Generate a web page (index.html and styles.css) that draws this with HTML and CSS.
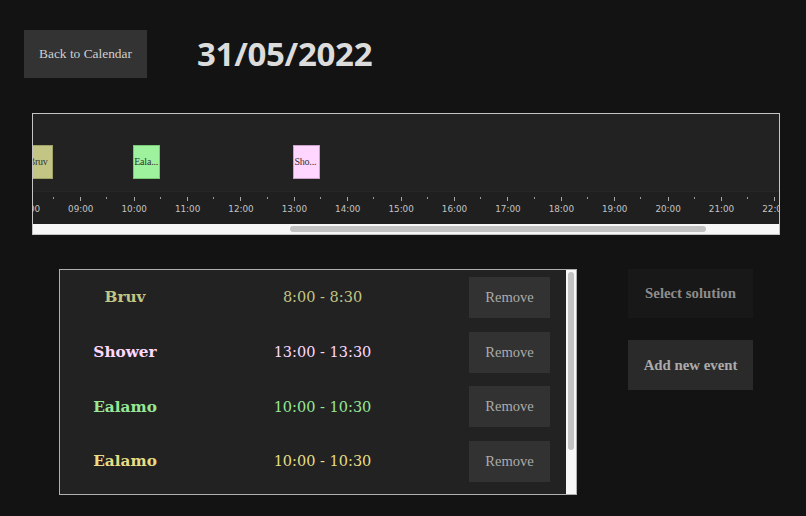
FILE: index.html
```html
<!DOCTYPE html>
<html>
<head>
<meta charset="utf-8">
<link rel="stylesheet" href="styles.css">
</head>
<body>
<header class="top">
  <button class="back-btn">Back to Calendar</button>
  <h1 class="date">31/05/2022</h1>
</header>

<section class="timeline">
  <div class="lane">
    <div class="event ev-bruv" style="left:-6.6px" title="Bruv">Bruv</div>
    <div class="event ev-eala" style="left:100.2px" title="Ealamo">Eala...</div>
    <div class="event ev-shower" style="left:260.4px" title="Shower">Sho...</div>
  </div>
  <div class="axis">
    <div class="axis-row">
      <div class="hour"><span>08:00</span></div>
      <div class="hour"><span>09:00</span></div>
      <div class="hour"><span>10:00</span></div>
      <div class="hour"><span>11:00</span></div>
      <div class="hour"><span>12:00</span></div>
      <div class="hour"><span>13:00</span></div>
      <div class="hour"><span>14:00</span></div>
      <div class="hour"><span>15:00</span></div>
      <div class="hour"><span>16:00</span></div>
      <div class="hour"><span>17:00</span></div>
      <div class="hour"><span>18:00</span></div>
      <div class="hour"><span>19:00</span></div>
      <div class="hour"><span>20:00</span></div>
      <div class="hour"><span>21:00</span></div>
      <div class="hour"><span>22:00</span></div>
    </div>
  </div>
  <div class="hscroll"><div class="hthumb"></div></div>
</section>

<section class="bottom">
  <div class="list">
    <div class="rows">
      <div class="row c-bruv">
        <div class="name">Bruv</div>
        <div class="time">8:00 - 8:30</div>
        <button class="remove">Remove</button>
      </div>
      <div class="row c-shower">
        <div class="name">Shower</div>
        <div class="time">13:00 - 13:30</div>
        <button class="remove">Remove</button>
      </div>
      <div class="row c-eala">
        <div class="name">Ealamo</div>
        <div class="time">10:00 - 10:30</div>
        <button class="remove">Remove</button>
      </div>
      <div class="row c-eala2">
        <div class="name">Ealamo</div>
        <div class="time">10:00 - 10:30</div>
        <button class="remove">Remove</button>
      </div>
    </div>
    <div class="vscroll"><div class="vthumb"></div></div>
  </div>
  <div class="actions">
    <button class="act act-select">Select solution</button>
    <button class="act act-add">Add new event</button>
  </div>
</section>
</body>
</html>
```

FILE: styles.css
```css
html, body {
  margin: 0;
  padding: 0;
  background: #131313;
  width: 806px;
  height: 516px;
  overflow: hidden;
}

button {
  border: none;
  cursor: pointer;
  padding: 0;
}

.top {
  display: flex;
  align-items: center;
  padding: 30px 0 0 24px;
  gap: 50px;
}

.back-btn {
  width: 123px;
  height: 48px;
  background: #333333;
  color: #cfcfcf;
  font-family: "Liberation Serif", serif;
  font-size: 13.4px;
}

.date {
  margin: 0;
  font-family: "Open Sans", sans-serif;
  font-weight: 700;
  font-size: 33px;
  letter-spacing: -0.3px;
  color: #dcdcdc;
  line-height: 48px;
}

.timeline {
  margin: 35px 26px 0 32px;
  border: 1px solid #c4c4c4;
  background: #222222;
  overflow: hidden;
}

.lane {
  position: relative;
  height: 77px;
}

.event {
  position: absolute;
  top: 31px;
  width: 27px;
  height: 34px;
  box-sizing: border-box;
  border: 1px solid;
  font-family: "Liberation Serif", serif;
  font-size: 10px;
  letter-spacing: -0.2px;
  line-height: 32px;
  color: #333;
  padding-left: 0;
  white-space: nowrap;
}

.ev-bruv { background: #c3c585; border-color: #9fa165; padding-left: 1px; }
.ev-eala { background: #9ef29e; border-color: #78c878; }
.ev-shower { background: #ffd6ff; border-color: #c8a0c8; }

.axis {
  height: 33px;
  box-sizing: border-box;
  border-top: 1px solid #262626;
  background: #1f1f1f;
  overflow: hidden;
}

.axis-row {
  display: flex;
  margin-left: -32.3px;
}

.hour {
  position: relative;
  flex: 0 0 53.4px;
  height: 32px;
  text-align: center;
}

.hour::before {
  content: "";
  position: absolute;
  left: 26.2px;
  top: 5px;
  width: 1px;
  height: 4px;
  background: #a8a8a8;
}

.hour::after {
  content: "";
  position: absolute;
  right: 0;
  top: 5px;
  width: 1px;
  height: 2px;
  background: #999;
}

.hour span {
  display: block;
  padding-top: 12px;
  font-family: "DejaVu Sans", sans-serif;
  font-size: 8.8px;
  line-height: 11px;
  color: #c4c4c4;
}

.hscroll {
  height: 10px;
  background: #f7f7f7;
  overflow: hidden;
}

.hthumb {
  margin: 2px 0 0 257px;
  width: 416px;
  height: 6px;
  border-radius: 3px;
  background: #c2c2c2;
}

.bottom {
  display: flex;
  align-items: flex-start;
  margin-top: 34px;
  padding-left: 59px;
  gap: 51px;
}

.list {
  display: flex;
  width: 516px;
  height: 224px;
  border: 1px solid #b0b0b0;
  background: #222222;
}

.rows {
  flex: 1;
}

.row {
  display: grid;
  grid-template-columns: 130px 265px 1fr;
  align-items: center;
  height: 54.7px;
}

.name {
  text-align: center;
  font-family: "DejaVu Serif", serif;
  font-weight: 700;
  font-size: 15.3px;
}

.time {
  text-align: center;
  font-family: "DejaVu Serif", serif;
  font-size: 14.5px;
}

.remove {
  justify-self: start;
  margin-left: 14px;
  width: 81px;
  height: 41px;
  background: #323232;
  color: #ababab;
  font-family: "Liberation Serif", serif;
  font-size: 14.6px;
}

.c-bruv { color: #c3c585; }
.c-shower { color: #ffd8ff; }
.c-eala { color: #96e896; }
.c-eala2 { color: #e6dd86; }

.vscroll {
  width: 10px;
  background: #f7f7f7;
  padding-top: 2px;
  box-sizing: border-box;
}

.vthumb {
  margin-left: 2px;
  width: 6px;
  height: 178px;
  border-radius: 3px;
  background: #c2c2c2;
}

.actions {
  display: flex;
  flex-direction: column;
  gap: 22px;
}

.act {
  width: 125px;
  height: 50px;
  font-family: "Liberation Serif", serif;
  font-weight: 700;
  font-size: 14.8px;
}

.act-select {
  background: #181818;
  color: #8c8c8c;
  height: 49px;
}

.act-add {
  background: #2a2a2a;
  color: #ababab;
}
```
